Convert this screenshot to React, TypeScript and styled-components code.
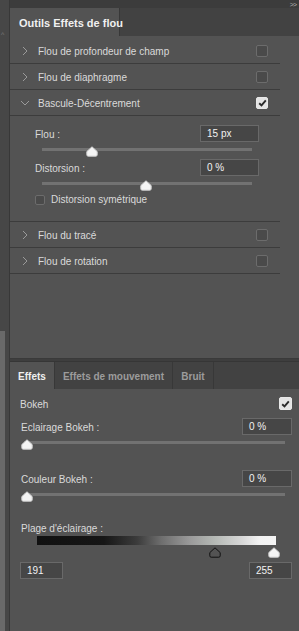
import { FunctionComponent } from 'react';
import styled, { createGlobalStyle } from 'styled-components';

const GlobalStyle = createGlobalStyle`
  html, body {
    margin: 0;
    padding: 0;
    background: #424242;
  }
  body {
    font-family: 'Liberation Sans', Arial, sans-serif;
    font-size: 10px;
    color: #dadada;
  }
`;

const Screen = styled.div`
  width: 299px;
  height: 631px;
  display: flex;
  overflow: hidden;
`;

const Gutter = styled.div`
  width: 9px;
  display: flex;
  flex-direction: column;
  justify-content: space-between;
  background: #474747;
  border-right: 1px solid #383838;
`;

const ScrollArrow = styled.div`
  margin-top: 31px;
  color: #7a7a7a;
  font-size: 7px;
  padding-left: 1px;
`;

const ScrollThumb = styled.div`
  width: 5px;
  height: 300px;
  background: #6a6a6a;
`;

const Main = styled.div`
  flex: 1;
  display: flex;
  flex-direction: column;
  min-width: 0;
`;

const TopStrip = styled.div`
  height: 8px;
  background: #3c3c3c;
  display: flex;
  justify-content: flex-end;
  align-items: center;
  padding-right: 3px;
  color: #b0b0b0;
  font-size: 7px;
  letter-spacing: -1px;
`;

const TabBar = styled.div<{ $height: number }>`
  height: ${(p) => p.$height}px;
  background: #424242;
  display: flex;
  align-items: stretch;
  flex: none;
`;

const Tab = styled.div<{ $active?: boolean; $width: number; $size?: number }>`
  width: ${(p) => p.$width}px;
  box-sizing: border-box;
  display: flex;
  align-items: center;
  justify-content: ${(p) => (p.$size ? 'flex-start' : 'center')};
  padding: 1px 0 0 ${(p) => (p.$size ? 9 : 0)}px;
  font-weight: bold;
  font-size: ${(p) => p.$size ?? 10}px;
  white-space: nowrap;
  color: ${(p) => (p.$active ? '#f0f0f0' : '#9c9c9c')};
  background: ${(p) => (p.$active ? '#535353' : 'transparent')};
  border-right: 1px solid #383838;
`;

const Panel = styled.div<{ $grow?: boolean }>`
  background: #535353;
  display: flex;
  flex-direction: column;
  flex: ${(p) => (p.$grow ? 1 : 'none')};
`;

const UpperPanel = styled(Panel)`
  height: 323px;
  box-sizing: border-box;
  padding-top: 2px;
  border-bottom: 1px solid #3a3a3a;
`;

const Divider = styled.div`
  height: 2px;
  background: #3e3e3e;
  border-bottom: 1px solid #363636;
  flex: none;
`;

const Row = styled.div`
  height: 26px;
  box-sizing: border-box;
  margin-right: 19px;
  display: flex;
  align-items: center;
  border-bottom: 1px solid #3c3c3c;
  flex: none;
`;

const Chevron = styled.span`
  width: 27px;
  display: flex;
  justify-content: center;
  padding-left: 1px;
`;

const RowLabel = styled.span`
  flex: 1;
  padding-top: 2px;
`;

const Box = styled.span<{ $checked?: boolean; $size?: number }>`
  width: ${(p) => p.$size ?? 12}px;
  height: ${(p) => p.$size ?? 12}px;
  box-sizing: border-box;
  border-radius: 2px;
  border: 1px solid ${(p) => (p.$checked ? '#e8e8e8' : '#6c6c6c')};
  background: ${(p) => (p.$checked ? '#e4e4e4' : '#4a4a4a')};
  display: flex;
  align-items: center;
  justify-content: center;
  flex: none;
`;

const RowBox = styled(Box)`
  margin-right: 12px;
`;

const SubSection = styled.div`
  margin-right: 19px;
  padding: 9px 21px 0 25px;
  height: 106px;
  box-sizing: border-box;
  border-bottom: 1px solid #3c3c3c;
  display: flex;
  flex-direction: column;
  flex: none;
`;

const FieldLine = styled.div`
  display: flex;
  align-items: center;
  justify-content: space-between;
  height: 17px;
  flex: none;
`;

const Field = styled.div<{ $width?: number }>`
  width: ${(p) => p.$width ?? 59}px;
  height: 17px;
  box-sizing: border-box;
  border: 1px solid #696969;
  background: #464646;
  color: #f2f2f2;
  padding-left: 6px;
  display: flex;
  align-items: center;
`;

const SliderWrap = styled.div<{ $left: number; $width: number }>`
  position: relative;
  margin-left: ${(p) => p.$left}px;
  width: ${(p) => p.$width}px;
  height: 17px;
  flex: none;
`;

const Track = styled.div`
  margin-top: 6px;
  height: 3px;
  background: #727272;
`;

const Thumb = styled.svg`
  position: absolute;
  top: 4px;
  width: 12px;
  height: 11px;
  margin-left: -6px;
`;

const CheckLine = styled.label`
  display: flex;
  align-items: center;
  gap: 6px;
  margin-top: 1px;
`;

const Body = styled.div`
  padding: 6px 7px 0 10px;
  display: flex;
  flex-direction: column;
`;

const Label = styled.div<{ $indent?: number }>`
  padding: 2px 0 0 ${(p) => p.$indent ?? 0}px;
  height: 14px;
  line-height: 12px;
  box-sizing: border-box;
  flex: none;
`;

const Gradient = styled.div`
  margin-left: 17px;
  width: 239px;
  height: 9px;
  flex: none;
  background: linear-gradient(
    to right,
    #111 0%,
    #161616 28%,
    #3c3c3c 42%,
    #6e6e6e 52%,
    #9a9a9a 64%,
    #b4b8b4 74%,
    #d8d8d8 86%,
    #f2f2f2 93%,
    #f4f4f4 100%
  );
`;

const GradientThumbs = styled.div`
  position: relative;
  height: 17px;
  flex: none;
`;

const ThumbShape: FunctionComponent<{ left: number; outline?: boolean; top?: number }> = ({
  left,
  outline,
  top
}) => (
  <Thumb viewBox="0 0 12 11" style={{ left, top }}>
    <path
      d="M6 0.8 L11.2 5.6 L11.2 8.8 Q11.2 10.2 9.8 10.2 L2.2 10.2 Q0.8 10.2 0.8 8.8 L0.8 5.6 Z"
      fill={outline ? 'none' : '#f4f4f4'}
      stroke={outline ? '#111' : '#cfcfcf'}
      strokeWidth="1"
    />
  </Thumb>
);

const Slider: FunctionComponent<{ left: number; width: number; value: number }> = ({
  left,
  width,
  value
}) => (
  <SliderWrap $left={left} $width={width}>
    <Track />
    <ThumbShape left={value} />
  </SliderWrap>
);

const Right = () => (
  <svg width="6" height="10" viewBox="0 0 6 10">
    <path d="M1 1 L5 5 L1 9" fill="none" stroke="#9a9a9a" strokeWidth="1" />
  </svg>
);

const Down = () => (
  <svg width="10" height="6" viewBox="0 0 10 6">
    <path d="M1 1 L5 5 L9 1" fill="none" stroke="#9a9a9a" strokeWidth="1" />
  </svg>
);

const Tick = () => (
  <svg width="9" height="8" viewBox="0 0 9 8">
    <path d="M1.2 4.2 L3.5 6.4 L7.8 1.4" fill="none" stroke="#2a2a2a" strokeWidth="1.9" />
  </svg>
);

const BlurRow: FunctionComponent<{ title: string; open?: boolean }> = ({ title, open }) => (
  <Row>
    <Chevron>{open ? <Down /> : <Right />}</Chevron>
    <RowLabel>{title}</RowLabel>
    <RowBox $checked={open}>{open && <Tick />}</RowBox>
  </Row>
);

const Spacer = styled.div<{ $h: number }>`
  height: ${(p) => p.$h}px;
  flex: none;
`;

const App = () => (
  <>
    <GlobalStyle />
    <Screen>
      <Gutter>
        <ScrollArrow>^</ScrollArrow>
        <ScrollThumb />
      </Gutter>
      <Main>
        <TopStrip>&gt;&gt;</TopStrip>
        <TabBar $height={28}>
          <Tab $active $width={110} $size={11}>
            Outils Effets de flou
          </Tab>
        </TabBar>
        <UpperPanel>
          <BlurRow title="Flou de profondeur de champ" />
          <BlurRow title="Flou de diaphragme" />
          <BlurRow title="Bascule-Décentrement" open />
          <SubSection>
            <FieldLine>
              <Label>Flou :</Label>
              <Field>15 px</Field>
            </FieldLine>
            <Slider left={7} width={210} value={50} />
            <FieldLine>
              <Label>Distorsion :</Label>
              <Field>0 %</Field>
            </FieldLine>
            <Slider left={7} width={210} value={104} />
            <CheckLine>
              <Box $size={10} />
              Distorsion symétrique
            </CheckLine>
          </SubSection>
          <BlurRow title="Flou du tracé" />
          <BlurRow title="Flou de rotation" />
        </UpperPanel>
        <Divider />
        <TabBar $height={27}>
          <Tab $active $width={45}>
            Effets
          </Tab>
          <Tab $width={118}>Effets de mouvement</Tab>
          <Tab $width={41}>Bruit</Tab>
        </TabBar>
        <Panel $grow>
          <Body>
            <FieldLine>
              <Label>Bokeh</Label>
              <Box $checked $size={13}>
                <Tick />
              </Box>
            </FieldLine>
            <Spacer $h={6} />
            <FieldLine>
              <Label $indent={1}>Eclairage Bokeh :</Label>
              <Field $width={50}>0 %</Field>
            </FieldLine>
            <Slider left={4} width={261} value={3} />
            <Spacer $h={18} />
            <FieldLine>
              <Label $indent={1}>Couleur Bokeh :</Label>
              <Field $width={50}>0 %</Field>
            </FieldLine>
            <Slider left={4} width={261} value={3} />
            <Spacer $h={17} />
            <Label $indent={1}>Plage d'éclairage :</Label>
            <Spacer $h={1} />
            <Gradient />
            <GradientThumbs>
              <ThumbShape left={195} outline top={2} />
              <ThumbShape left={254} top={2} />
            </GradientThumbs>
            <FieldLine>
              <Field $width={43}>191</Field>
              <Field $width={43}>255</Field>
            </FieldLine>
          </Body>
        </Panel>
      </Main>
    </Screen>
  </>
);

export default App;
